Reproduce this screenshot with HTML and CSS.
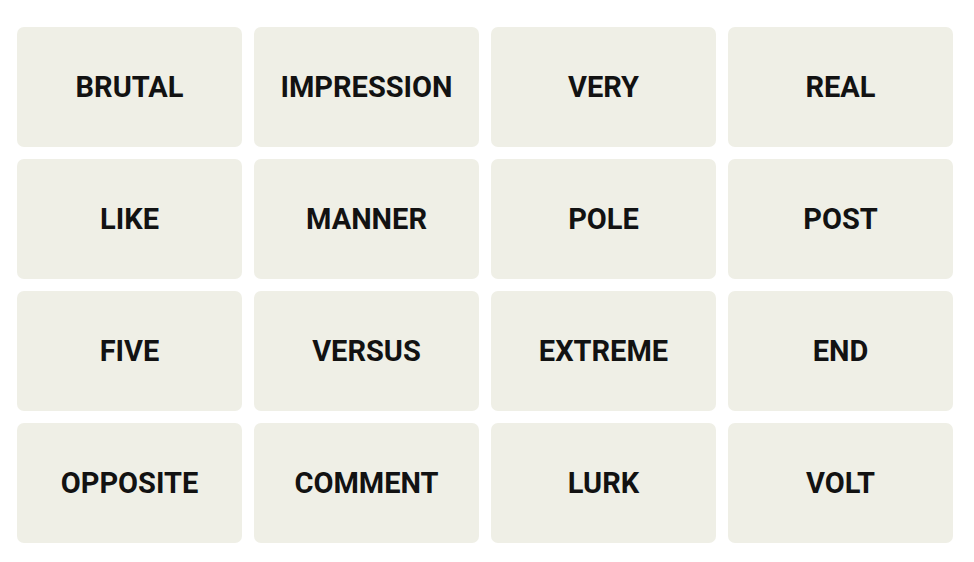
FILE: index.html
```html
<!DOCTYPE html>
<html>
<head>
<meta charset="utf-8">
<link rel="stylesheet" href="styles.css">
</head>
<body>
<div class="grid">
  <button class="tile">BRUTAL</button>
  <button class="tile">IMPRESSION</button>
  <button class="tile">VERY</button>
  <button class="tile">REAL</button>
  <button class="tile">LIKE</button>
  <button class="tile">MANNER</button>
  <button class="tile">POLE</button>
  <button class="tile">POST</button>
  <button class="tile">FIVE</button>
  <button class="tile">VERSUS</button>
  <button class="tile">EXTREME</button>
  <button class="tile">END</button>
  <button class="tile">OPPOSITE</button>
  <button class="tile">COMMENT</button>
  <button class="tile">LURK</button>
  <button class="tile">VOLT</button>
</div>
</body>
</html>
```
FILE: styles.css
```css
html, body {
  margin: 0;
  padding: 0;
  background: #ffffff;
}
.grid {
  display: grid;
  grid-template-columns: repeat(4, 225px);
  grid-auto-rows: 120px;
  gap: 12px;
  padding: 27px 0 0 17px;
}
.tile {
  border: none;
  margin: 0;
  padding: 0;
  background: #efefe6;
  border-radius: 7px;
  display: flex;
  align-items: center;
  justify-content: center;
  font-family: Roboto, "Liberation Sans", sans-serif;
  font-weight: 700;
  font-size: 29px;
  color: #121212;
  text-transform: uppercase;
  cursor: pointer;
}
```
